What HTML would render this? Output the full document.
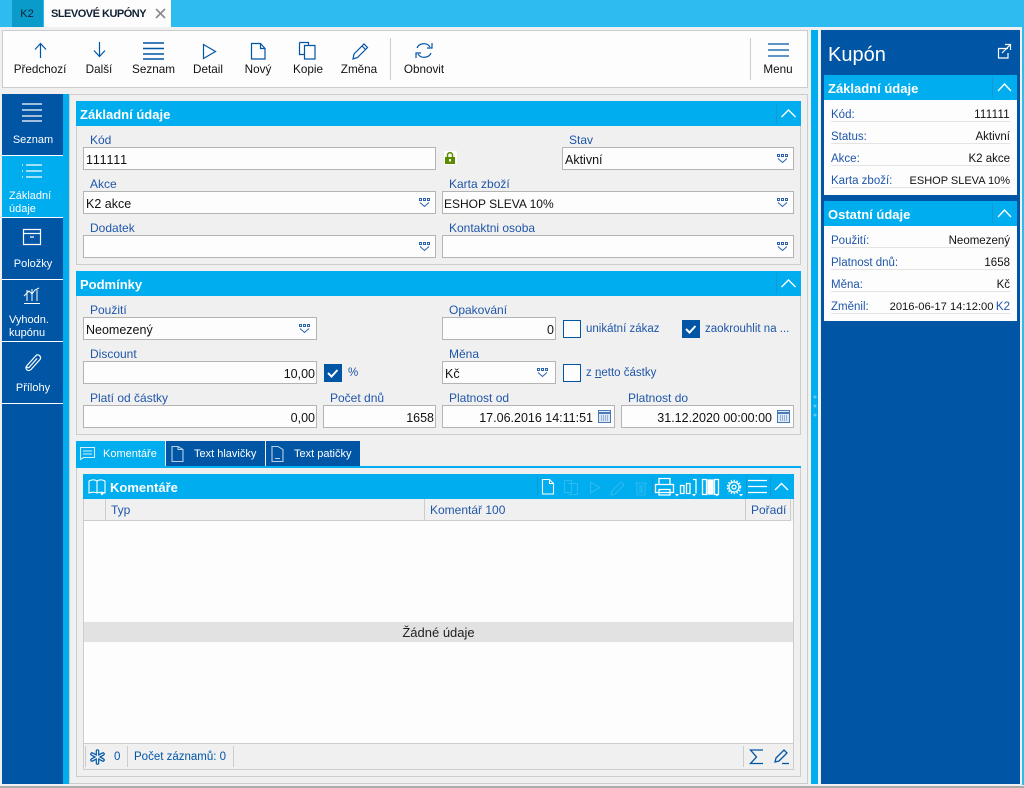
<!DOCTYPE html>
<html><head><meta charset="utf-8"><title>Slevové kupóny</title>
<style>
*{box-sizing:border-box}
html,body{margin:0;padding:0}
body{width:1024px;height:788px;position:relative;overflow:hidden;background:#f0f0f0;font:12px "Liberation Sans",sans-serif;color:#111}
.b{position:absolute}
.t{position:absolute;white-space:nowrap;line-height:16px;height:16px}
.c{transform:translateX(-50%)}
.r{transform:translateX(-100%)}
.l{color:#1f56a8}
.w{color:#fff}
.tb{font-size:11.7px}
.nv{font-size:11px;color:#fff}
.h{position:absolute;background:#00adef;color:#fff;font-weight:bold;font-size:13px;line-height:27px;padding-left:4px;height:25px}
.f{position:absolute;height:23px;background:#fdfdfd;border:1px solid #b4b4b4;font-size:12.5px;line-height:24px;padding:0 2px;color:#111;white-space:nowrap}
.f.n{text-align:right;padding-right:1px}
.chk{position:absolute;width:18px;height:18px;border:1px solid #0055a5;background:#fdfdfd}
.chk.on{background:#0055a5}
.box{position:absolute;border:1px solid #ccc}
.s{font-size:11.5px}
svg{position:absolute;left:0;top:0;overflow:visible}
</style></head><body>
<div class="b" style="left:0;top:0;width:1024px;height:27px;background:#2dbbf0"></div>
<div class="b" style="left:12px;top:0;width:31px;height:27px;background:#0a9bcb"></div>
<div class="b" style="left:44px;top:0;width:127px;height:27px;background:#fdfdfd"></div>
<div class="t c" style="left:27px;top:6px;color:#123;font-size:11px">K2</div>
<div class="t" style="left:51px;top:6px;font-weight:bold;font-size:11px;letter-spacing:-.5px;color:#123">SLEVOVÉ KUPÓNY</div>

<div class="b" style="left:2px;top:30px;width:806px;height:58px;background:#fdfdfd;border:1px solid #ccc"></div>
<div class="b" style="left:390px;top:38px;width:1px;height:42px;background:#ccc"></div>
<div class="b" style="left:750px;top:38px;width:1px;height:42px;background:#ccc"></div>
<div class="t c tb" style="left:40px;top:62px">Předchozí</div>
<div class="t c tb" style="left:99px;top:62px">Další</div>
<div class="t c tb" style="left:153.500px;top:62px">Seznam</div>
<div class="t c tb" style="left:208px;top:62px">Detail</div>
<div class="t c tb" style="left:258px;top:62px">Nový</div>
<div class="t c tb" style="left:308px;top:62px">Kopie</div>
<div class="t c tb" style="left:359px;top:62px">Změna</div>
<div class="t c tb" style="left:424px;top:62px">Obnovit</div>
<div class="t c tb" style="left:778px;top:62px">Menu</div>

<div class="b" style="left:2px;top:94px;width:61px;height:690px;background:#0055a5"></div>
<div class="b" style="left:63px;top:94px;width:6px;height:690px;background:#00adef"></div>
<div class="b" style="left:2px;top:156px;width:61px;height:61px;background:#00adef"></div>
<div class="b" style="left:2px;top:155px;width:61px;height:1px;background:#fff"></div>
<div class="b" style="left:2px;top:217px;width:61px;height:1px;background:#fff"></div>
<div class="b" style="left:2px;top:279px;width:61px;height:1px;background:#fff"></div>
<div class="b" style="left:2px;top:341px;width:61px;height:1px;background:#fff"></div>
<div class="b" style="left:2px;top:403px;width:61px;height:1px;background:#fff"></div>
<div class="t c nv" style="left:33px;top:132px">Seznam</div>
<div class="t nv" style="left:9px;top:188px">Základní</div>
<div class="t nv" style="left:9px;top:201px">údaje</div>
<div class="t c nv" style="left:33px;top:256px">Položky</div>
<div class="t nv" style="left:9px;top:312px">Vyhodn.</div>
<div class="t nv" style="left:9px;top:325px">kupónu</div>
<div class="t c nv" style="left:33px;top:380px">Přílohy</div>

<div class="b" style="left:69px;top:94px;width:739px;height:690px;border:1px solid #ccc"></div>

<div class="box" style="left:76px;top:101px;width:725px;height:164px"></div>
<div class="h" style="left:76px;top:101px;width:725px">Základní údaje</div>
<div class="t l" style="left:90px;top:132px">Kód</div>
<div class="f" style="left:83px;top:147px;width:353px;letter-spacing:.8px">111111</div>
<div class="t l" style="left:569px;top:132px">Stav</div>
<div class="f" style="left:562px;top:147px;width:232px">Aktivní</div>
<div class="t l" style="left:90px;top:176px">Akce</div>
<div class="f" style="left:83px;top:191px;width:353px">K2 akce</div>
<div class="t l" style="left:449px;top:176px">Karta zboží</div>
<div class="f" style="left:442px;top:191px;width:352px;padding-left:1px;font-size:12px">ESHOP SLEVA 10%</div>
<div class="t l" style="left:90px;top:220px">Dodatek</div>
<div class="f" style="left:83px;top:235px;width:353px"></div>
<div class="t l" style="left:449px;top:220px">Kontaktni osoba</div>
<div class="f" style="left:442px;top:235px;width:352px"></div>

<div class="box" style="left:76px;top:271px;width:725px;height:164px"></div>
<div class="h" style="left:76px;top:271px;width:725px">Podmínky</div>
<div class="t l" style="left:90px;top:302px">Použití</div>
<div class="f" style="left:83px;top:317px;width:234px">Neomezený</div>
<div class="t l" style="left:449px;top:302px">Opakování</div>
<div class="f n" style="left:442px;top:317px;width:114px">0</div>
<div class="chk" style="left:563px;top:320px"></div>
<div class="t l s" style="left:586px;top:321px">unikátní zákaz</div>
<div class="chk on" style="left:682px;top:320px"></div>
<div class="t l s" style="left:705px;top:321px">zaokrouhlit na ...</div>
<div class="t l" style="left:90px;top:346px">Discount</div>
<div class="f n" style="left:83px;top:361px;width:234px">10,00</div>
<div class="chk on" style="left:324px;top:364px"></div>
<div class="t l s" style="left:348px;top:365px">%</div>
<div class="t l" style="left:449px;top:346px">Měna</div>
<div class="f" style="left:442px;top:361px;width:114px">Kč</div>
<div class="chk" style="left:563px;top:364px"></div>
<div class="t l s" style="left:586px;top:365px">z <u>n</u>etto částky</div>
<div class="t l" style="left:90px;top:390px">Platí od částky</div>
<div class="f n" style="left:83px;top:405px;width:234px">0,00</div>
<div class="t l" style="left:330px;top:390px">Počet dnů</div>
<div class="f n" style="left:323px;top:405px;width:113px">1658</div>
<div class="t l" style="left:449px;top:390px">Platnost od</div>
<div class="f n" style="left:442px;top:405px;width:173px;padding-right:21px">17.06.2016 14:11:51</div>
<div class="t l" style="left:628px;top:390px">Platnost do</div>
<div class="f n" style="left:621px;top:405px;width:173px;padding-right:21px">31.12.2020 00:00:00</div>

<div class="b" style="left:76px;top:441px;width:89px;height:26px;background:#00adef"></div>
<div class="b" style="left:166px;top:441px;width:99px;height:25px;background:#0055a5"></div>
<div class="b" style="left:266px;top:441px;width:94px;height:25px;background:#0055a5"></div>
<div class="b" style="left:76px;top:466px;width:725px;height:2px;background:#00adef"></div>
<div class="t w" style="left:103px;top:446px;font-size:11px">Komentáře</div>
<div class="t w" style="left:194px;top:446px;font-size:11px">Text hlavičky</div>
<div class="t w" style="left:294px;top:446px;font-size:11px">Text patičky</div>
<div class="box" style="left:76px;top:468px;width:725px;height:309px;border-top:0"></div>

<div class="b" style="left:83px;top:474px;width:711px;height:296px;border:1px solid #ccc"></div>
<div class="h" style="left:83px;top:474px;width:711px;padding-left:27px">Komentáře</div>
<div class="b" style="left:84px;top:521px;width:709px;height:222px;background:#fdfdfd"></div>
<div class="b" style="left:84px;top:520px;width:707px;height:1px;background:#ccc"></div>
<div class="b" style="left:105px;top:499px;width:1px;height:21px;background:#ccc"></div>
<div class="b" style="left:424px;top:499px;width:1px;height:21px;background:#ccc"></div>
<div class="b" style="left:745px;top:499px;width:1px;height:21px;background:#ccc"></div>
<div class="b" style="left:790px;top:499px;width:1px;height:21px;background:#ccc"></div>
<div class="t l" style="left:111px;top:502px">Typ</div>
<div class="t l" style="left:430px;top:502px">Komentář 100</div>
<div class="t l" style="left:751px;top:502px">Pořadí</div>
<div class="b" style="left:84px;top:622px;width:709px;height:20px;background:#e2e2e2;text-align:center;line-height:22px;font-size:13px;color:#222">Žádné údaje</div>
<div class="b" style="left:84px;top:743px;width:709px;height:1px;background:#ccc"></div>
<div class="b" style="left:85px;top:746px;width:1px;height:21px;background:#ccc"></div>
<div class="b" style="left:127px;top:746px;width:1px;height:21px;background:#ccc"></div>
<div class="b" style="left:233px;top:746px;width:1px;height:21px;background:#ccc"></div>
<div class="b" style="left:743px;top:746px;width:1px;height:21px;background:#ccc"></div>
<div class="t s" style="left:114px;top:749px;color:#0055a5">0</div>
<div class="t s" style="left:134px;top:749px;color:#0055a5">Počet záznamů: 0</div>

<div class="b" style="left:811px;top:30px;width:7px;height:754px;background:#00adef"></div>
<div class="b" style="left:821px;top:30px;width:199px;height:754px;background:#0055a5"></div>
<div class="t w" style="left:828px;top:44px;font-size:20px;height:22px;line-height:22px">Kupón</div>

<div class="b" style="left:824px;top:75px;width:193px;height:120px;background:#fdfdfd"></div>
<div class="h" style="left:824px;top:75px;width:193px">Základní údaje</div>
<div class="b" style="left:824px;top:201px;width:193px;height:120px;background:#fdfdfd"></div>
<div class="h" style="left:824px;top:201px;width:193px">Ostatní údaje</div>

<div class="t l s" style="left:831px;top:107px">Kód:</div><div class="t r s" style="left:1010px;top:107px;letter-spacing:.3px">111111</div>
<div class="t l s" style="left:831px;top:129px">Status:</div><div class="t r s" style="left:1010px;top:129px">Aktivní</div>
<div class="t l s" style="left:831px;top:151px">Akce:</div><div class="t r s" style="left:1010px;top:151px">K2 akce</div>
<div class="t l s" style="left:831px;top:173px">Karta zboží:</div><div class="t r" style="left:1010px;top:173px;font-size:11px">ESHOP SLEVA 10%</div>
<div class="t l s" style="left:831px;top:233px">Použití:</div><div class="t r s" style="left:1010px;top:233px">Neomezený</div>
<div class="t l s" style="left:831px;top:255px">Platnost dnů:</div><div class="t r s" style="left:1010px;top:255px">1658</div>
<div class="t l s" style="left:831px;top:277px">Měna:</div><div class="t r s" style="left:1010px;top:277px">Kč</div>
<div class="t l s" style="left:831px;top:299px">Změnil:</div><div class="t r" style="left:993.500px;top:299px;font-size:11.200px">2016-06-17 14:12:00</div><div class="t r l s" style="left:1010px;top:299px">K2</div>

<div class="b" style="left:1022px;top:27px;width:2px;height:758px;background:#2dbbf0"></div>
<div class="b" style="left:0;top:785px;width:1024px;height:3px;background:#f0f0f0;border-bottom:2px solid #aaa"></div>

<svg width="1024" height="788" viewBox="0 0 1024 788" fill="none">
<path d="M156 9l9 9M165 9l-9 9" stroke="#8a8a8a" stroke-width="1.6"/>
<g stroke="#0055a5" stroke-width="1.2">
<path d="M40.500 58V44M35 49.500l5.500-6 5.500 6"/>
<path d="M99.500 42V56M94 50.500l5.500 6 5.500-6"/>
<path d="M143 43h21M143 48.500h21M143 54h21M143 59h21" stroke-width="1.500"/>
<path d="M203.500 44.500v14l12-7z"/>
<path d="M251.500 43.500h9l4.500 5v10.500h-13.500zM260.500 43.500v5h4.500"/>
<path d="M299.500 42.500h9v3M304.500 45.500h10.500v13.500h-10.500zM304 54.500h-4.500v-12"/>
<path d="M353 59l1-5 10-10 3.500 3.500-10 10zM362 46l3.500 3.500"/>
<path d="M417 48c2-5 10-6 13-1M432 43v5h-5M431 53c-2 5-10 6-13 1M416 58v-5h5"/>
<path d="M768 44h21M768 50h21M768 56h21" stroke-width="1.300"/>
</g>
<g stroke="#fff" stroke-width="1.200">
<path d="M22 104h20M22 110h20M22 116h20M22 121h20"/>
<path d="M22 165h1M22 171h1M22 177h1M26 165h16M26 171h16M26 177h16"/>
<path d="M23.500 229.500h17v15h-17zM23.500 233.500h17M30 237h4"/>
<path d="M24 303.500h16M27 290v11M32 289v12M37 290v11M24 296l5-5 3 3 3-4 4-2" stroke-width="1"/>
<path d="M37 354l-10 11c-3 3 1 7 4 4l9-10c2-3-2-6-4-4l-9 10c-1 1 0 3 2 2l8-9" transform="translate(0 .5)"/>
</g>
<path d="M1008 48.500h-9.500v9.500h9.500v-5M1002 53l8-8M1005 44.500h5.500v5.500" stroke="#fff" stroke-width="1.200"/>
<g stroke="#fff" stroke-width="1.400">
<path d="M781.500 117l7-7 7 7M781.500 287l7-7 7 7M775 490l6.500-6.500 6.500 6.500M998 91l6.500-7 6.500 7M998 217l6.500-7 6.500 7"/>
</g>
<g stroke="#1996cf" stroke-width="1">
<path d="M776.500 103v21M776.500 273v21M992.500 77v21M992.500 203v21M537.500 476v21M652.500 476v21M746.500 476v21M770.500 476v21"/>
</g>
<g stroke="#2a62ad" fill="none">
<path id="d" d="M419.500 198.500h2v2h-2zM423.500 198.500h2v2h-2zM427.500 198.500h2v2h-2zM420 202.500l4.500 4 4.500-4"/>
<use href="#d" y="44"/><use href="#d" x="358"/><use href="#d" x="358" y="44"/>
<use href="#d" x="358" y="-44"/><use href="#d" x="-120" y="126"/><use href="#d" x="118" y="170"/>
</g>
<rect x="444" y="151" width="13" height="14" fill="#fdfdfd"/>
<rect x="445" y="157" width="10" height="7" fill="#5b8c00"/>
<path d="M447.500 157v-2c0-3 5-3 5 0v2" stroke="#5b8c00" stroke-width="1.500"/>
<rect x="449" y="159" width="2" height="2.500" fill="#fdfdfd"/>
<g stroke="#fff" stroke-width="2">
<path d="M686 329l3.500 3.500 6-6.500M328 373l3.500 3.500 6-6.500"/>
</g>
<g stroke="#4a79b8">
<path d="M598.500 410.500h12v12h-12z" fill="#dce8f5"/>
<path d="M598.500 413h12" stroke-width="2"/>
<path d="M601 416h7M601 418h7M601 420h7" stroke-dasharray="1 1"/>
<path d="M777.500 410.500h12v12h-12z" fill="#dce8f5"/>
<path d="M777.500 413h12" stroke-width="2"/>
<path d="M780 416h7M780 418h7M780 420h7" stroke-dasharray="1 1"/>
</g>
<g stroke="#d7eefb" stroke-width="1.100">
<path d="M80.500 447.500h14v10h-11l-3 2zM83 451h9M83 454h9"/>
<path d="M172 446.500h6l5 3v12h-11zM178 446.500v3h5" stroke="#b9cfe8"/>
<path d="M272 446.500h6l5 3v12h-11zM275 458.500h5" stroke="#b9cfe8"/>
</g>
<g stroke="#fff" stroke-width="1.100">
<path d="M89 481c3-1.500 6-1.500 8 0 2-1.500 5-1.500 8 0v12c-3-1-6-1-8 0-2-1-5-1-8 0zM97 481v12"/>
<path d="M542.500 479.500h7l4 4v10.500h-11zM549.500 479.500v4h4"/>
</g>
<g stroke="#2fb9ee" stroke-width="1.100">
<path d="M564.500 480.500h7v12h-7zM568.500 483.500h9v11h-9"/>
<path d="M590.500 482v11l9-5.500z"/>
<path d="M611 495l1-4 9-9 3 3-9 9z"/>
<path d="M635 483h12M637 483v12h8v-12M640 485v8M642 485v8"/>
</g>
<g stroke="#fff" stroke-width="1.300">
<path d="M659 484.500v-6h11v6M655.500 484.500h18v8h-18zM659 489.500h11v5.500h-11z"/>
<path d="M680.500 485.500h3.500v8h-3.500zM686.500 483.500h3.500v10h-3.500zM693 479.500h3v14"/>
<path d="M702.500 479.500h4v15h-4zM714.500 479.500h4v15h-4z"/><path d="M708 480h5v14h-5z" fill="#fff"/>
<circle cx="734" cy="487" r="5"/><circle cx="734" cy="487" r="2"/>
<circle cx="734" cy="487" r="6.500" stroke-width="1.500" stroke-dasharray="1.500 1.500"/>
<path d="M748 480.500h19M748 486.500h19M748 492.500h19"/>
</g>
<g fill="#fff"><path d="M675 494h4l-2 2.500zM692 494h4l-2 2.500zM715 494h4l-2 2.500zM739 494h4l-2 2.500zM100 493h4l-2 2.500z"/></g>
<g stroke="#0055a5" stroke-width="3.600" stroke-linecap="round">
<path d="M97.500 751v12M92 754l11 6M103 754l-11 6"/>
</g>
<g stroke="#eef3f8" stroke-width="1.200" stroke-linecap="round">
<path d="M97.500 751v12M92 754l11 6M103 754l-11 6"/>
</g>
<g stroke="#0055a5" stroke-width="1.300">
<path d="M763 750h-12.500l6 7-6 6.500h12.500"/>
<path d="M775 762l1-4 8-8 3 3-8 8zM782 763.500h7"/>
</g>
<g fill="#5fc5ec"><circle cx="815" cy="397" r="1.500"/><circle cx="815" cy="406" r="1.500"/><circle cx="815" cy="415" r="1.500"/></g>
<g stroke="#e4e4e4">
<path d="M831 121.500h179M831 143.500h179M831 165.500h179M831 187.500h179M831 247.500h179M831 269.500h179M831 291.500h179M831 313.500h179"/>
</g>
</svg>
</body></html>
